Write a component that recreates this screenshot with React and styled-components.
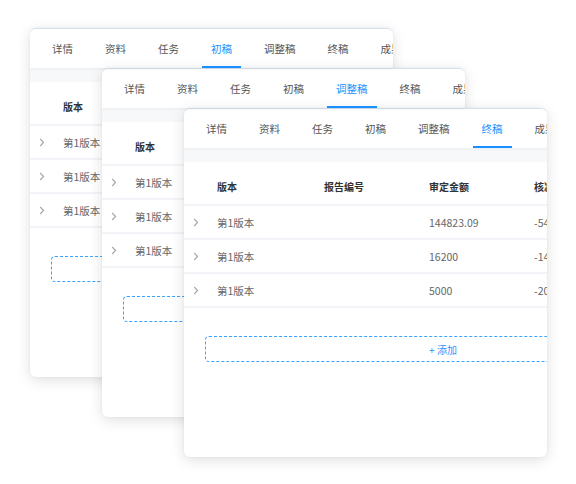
import React from 'react';
import styled, { createGlobalStyle } from 'styled-components';

const GlobalStyle = createGlobalStyle`
  html, body {
    margin: 0;
    padding: 0;
    background: #fff;
  }
  body {
    font-family: "Noto Sans CJK SC", "Noto Sans", sans-serif;
  }
`;

const Canvas = styled.div`
  position: relative;
  width: 576px;
  height: 484px;
  overflow: hidden;
  background: #fff;
`;

// each card is a window laid on the canvas
const Card = styled.div`
  position: absolute;
  left: ${(p) => p.$x}px;
  top: ${(p) => p.$y}px;
  width: 363px;
  height: 349px;
  box-sizing: border-box;
  background: #fff;
  border-radius: 6px;
  border-top: 1px solid #d3e0ee;
  box-shadow: 0 3px 14px rgba(0, 0, 0, 0.13), 0 0 3px rgba(0, 0, 0, 0.05);
  overflow: hidden;
`;

const Inner = styled.div`
  width: 540px;
  display: flex;
  flex-direction: column;
`;

const TabBar = styled.div`
  display: flex;
  flex-direction: row;
  gap: 14px;
  height: 39px;
  padding: 0 13px;
  position: relative;
  z-index: 1;
  box-shadow: 0 1px 3px rgba(0, 0, 0, 0.06);
`;

const Tab = styled.div`
  position: relative;
  padding: 0 9px;
  font-size: 10.5px;
  line-height: 39px;
  white-space: nowrap;
  color: ${(p) => (p.$active ? '#1890ff' : '#555')};

  &::after {
    content: '';
    display: ${(p) => (p.$active ? 'block' : 'none')};
    position: absolute;
    left: 0;
    right: 0;
    bottom: 0;
    height: 2px;
    background: #1890ff;
  }
`;

const Band = styled.div`
  height: 14px;
  background: #f7f8fa;
`;

const Row = styled.div`
  display: grid;
  grid-template-columns: 33px 107px 105px 105px 1fr;
  align-items: center;
  box-sizing: border-box;
  height: ${(p) => (p.$head ? '44px' : '34px')};
  padding-top: ${(p) => (p.$head ? '6px' : '0')};
  border-bottom: 2px solid #f3f3f8;
  font-size: ${(p) => (p.$head ? '10px' : '10.5px')};
  font-weight: ${(p) => (p.$head ? 700 : 400)};
  color: ${(p) => (p.$head ? '#333' : '#666')};
  white-space: nowrap;
`;

const Chevron = styled.div`
  display: flex;
  align-items: center;
  padding-left: 9px;
`;

const AddButton = styled.div`
  margin: 28px 0 0 21px;
  width: 476px;
  height: 26px;
  box-sizing: border-box;
  border: 1px dashed #3ca2ff;
  border-radius: 4px;
  display: flex;
  align-items: center;
  justify-content: center;
  font-size: 10px;
  color: #2f93ff;
`;

const tabs = ['详情', '资料', '任务', '初稿', '调整稿', '终稿', '成果'];

const rows = [
  { amount: '144823.09', cut: '-5476.91' },
  { amount: '16200', cut: '-1400' },
  { amount: '5000', cut: '-200' },
];

function Arrow() {
  return (
    <svg width="6" height="9" viewBox="0 0 6 9">
      <path d="M1.2 1 L4.6 4.5 L1.2 8" fill="none" stroke="#a6a6a6" strokeWidth="1.1" />
    </svg>
  );
}

function Window({ x, y, active }) {
  return (
    <Card $x={x} $y={y}>
      <Inner>
        <TabBar>
          {tabs.map((t) => (
            <Tab key={t} $active={t === active}>
              {t}
            </Tab>
          ))}
        </TabBar>
        <Band />
        <Row $head>
          <div />
          <div>版本</div>
          <div>报告编号</div>
          <div>审定金额</div>
          <div>核减金额</div>
        </Row>
        {rows.map((r, i) => (
          <Row key={i}>
            <Chevron>
              <Arrow />
            </Chevron>
            <div>第1版本</div>
            <div />
            <div>{r.amount}</div>
            <div>{r.cut}</div>
          </Row>
        ))}
        <AddButton>+ 添加</AddButton>
      </Inner>
    </Card>
  );
}

export default function App() {
  return (
    <>
      <GlobalStyle />
      <Canvas>
        <Window x={30} y={28} active="初稿" />
        <Window x={102} y={68} active="调整稿" />
        <Window x={184} y={108} active="终稿" />
      </Canvas>
    </>
  );
}
